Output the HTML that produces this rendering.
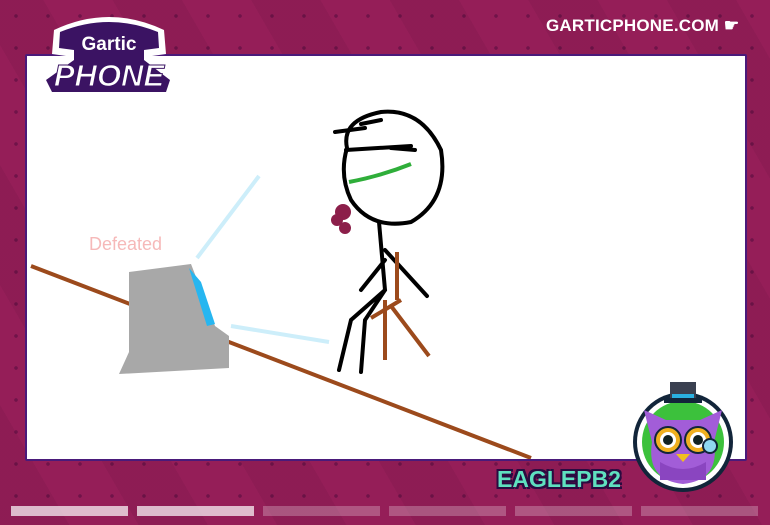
<!DOCTYPE html>
<html><head><style>
body{margin:0;width:770px;height:525px;overflow:hidden;background:#951e58;font-family:"Liberation Sans",sans-serif;position:relative}
.bg{position:absolute;inset:0;background:repeating-linear-gradient(60deg,rgba(0,0,0,0.05) 0 60px,rgba(0,0,0,0) 60px 120px),radial-gradient(circle,rgba(80,10,60,0.55) 1.6px,transparent 2px) 0 0/32px 32px}
.canvas{position:absolute;left:25px;top:54px;width:718px;height:403px;background:#fff;border:2px solid #4a1a7a;border-radius:2px}
.site{position:absolute;left:546px;top:16px;color:#fff;font-weight:bold;font-size:17px;letter-spacing:0.2px}
.name{position:absolute;left:497px;top:466px;color:#5fe0bf;font-weight:bold;font-size:23px;text-shadow:0 0 0 #2a0b40,2px 2px 0 #2a0b40,-2px -2px 0 #2a0b40,2px -2px 0 #2a0b40,-2px 2px 0 #2a0b40}
.bar{position:absolute;top:506px;height:10px;width:117px;background:rgba(255,255,255,0.25)}
</style></head><body>
<div class="bg"></div>
<div class="canvas">
<svg width="718" height="403" viewBox="26 56 718 403">
<line x1="30" y1="266" x2="530" y2="458" stroke="#9c4a1c" stroke-width="4"/>
<line x1="258" y1="176" x2="196" y2="258" stroke="#cdeefa" stroke-width="4"/>
<line x1="230" y1="326" x2="328" y2="342" stroke="#cdeefa" stroke-width="4"/>
<path d="M128 272 L190 264 L214 326 L228 336 L228 368 L118 374 L128 352 Z" fill="#a8a8a8"/>
<path d="M188 268 L200 282 L214 324 L206 326 Z" fill="#27b6f0"/>
<text x="88" y="250" font-size="18" fill="#f6b9b9" font-family="Liberation Sans">Defeated</text>
<g fill="none" stroke="#000" stroke-width="4" stroke-linecap="round">
<path d="M346 148 Q340 120 380 112 Q420 108 440 150 Q448 200 410 222 Q370 230 350 200 Q338 175 346 148 Z"/>
<path d="M334 132 L364 128 M360 124 L380 120 M345 150 L410 146 M390 148 L414 150"/>
<path d="M378 222 L384 290 L350 320 L338 370 M384 290 L364 320 L360 372 M384 250 L426 296 M384 260 L360 290"/>
</g>
<path d="M348 182 Q380 176 410 164" stroke="#2fae3a" stroke-width="4" fill="none"/>
<g fill="#8c1f4a"><circle cx="342" cy="212" r="8"/><circle cx="336" cy="220" r="6"/><circle cx="344" cy="228" r="6"/></g>
<g stroke="#9c4a1c" stroke-width="4" fill="none"><path d="M396 252 L396 300 M384 300 L384 360 M390 306 L428 356 M370 318 L400 300"/></g>
</svg>
</div>
<svg style="position:absolute;left:36px;top:8px" width="146" height="92" viewBox="0 0 146 92">
<path d="M18 22 Q73 -4 128 22 L130 46 L116 48 L140 72 L136 90 L10 90 L4 72 L30 48 L16 46 Z" fill="#fff"/>
<path d="M24 24 Q73 4 122 24 L123 40 L108 42 L108 52 L134 72 L130 84 L16 84 L10 72 L38 52 L38 42 L23 40 Z" fill="#3b1363"/>
<text x="73" y="42" text-anchor="middle" font-weight="bold" font-size="19" fill="#fff">Gartic</text>
<text x="73" y="78" text-anchor="middle" font-weight="bold" font-style="italic" font-size="31" fill="#fff" stroke="#3b1363" stroke-width="1">PHONE</text>
</svg>
<div class="site">GARTICPHONE.COM ☛</div>
<svg style="position:absolute;left:630px;top:380px" width="106" height="112" viewBox="0 0 106 112">
<circle cx="53" cy="62" r="50" fill="#12253a"/><circle cx="53" cy="62" r="46" fill="#fff"/><circle cx="53" cy="62" r="41" fill="#3cc13c"/>
<path d="M14 30 L36 40 L70 40 L92 30 L84 62 Q90 100 53 104 Q16 100 22 62 Z" fill="#a25dd8"/>
<path d="M30 82 Q53 96 76 82 L76 100 L30 100 Z" fill="#8a45c0"/>
<circle cx="38" cy="60" r="13" fill="#f0b020" stroke="#12253a" stroke-width="2"/><circle cx="68" cy="60" r="13" fill="#f0b020" stroke="#12253a" stroke-width="2"/>
<circle cx="38" cy="60" r="8" fill="#fff"/><circle cx="68" cy="60" r="8" fill="#fff"/>
<circle cx="38" cy="60" r="5" fill="#122"/><circle cx="68" cy="60" r="5" fill="#122"/>
<path d="M46 74 L60 74 L53 82 Z" fill="#f0c020"/>
<circle cx="80" cy="66" r="7" fill="#8fd8f0" stroke="#12253a" stroke-width="2"/>
<rect x="40" y="2" width="26" height="16" fill="#3a4050"/><rect x="34" y="18" width="38" height="5" fill="#12253a"/><rect x="42" y="14" width="22" height="4" fill="#2ab0e0"/>
</svg>
<div class="name">EAGLEPB2</div>
<div class="bar" style="left:11px;background:rgba(255,255,255,0.7)"></div>
<div class="bar" style="left:137px;background:rgba(255,255,255,0.7)"></div>
<div class="bar" style="left:263px"></div>
<div class="bar" style="left:389px"></div>
<div class="bar" style="left:515px"></div>
<div class="bar" style="left:641px"></div>
</body></html>
